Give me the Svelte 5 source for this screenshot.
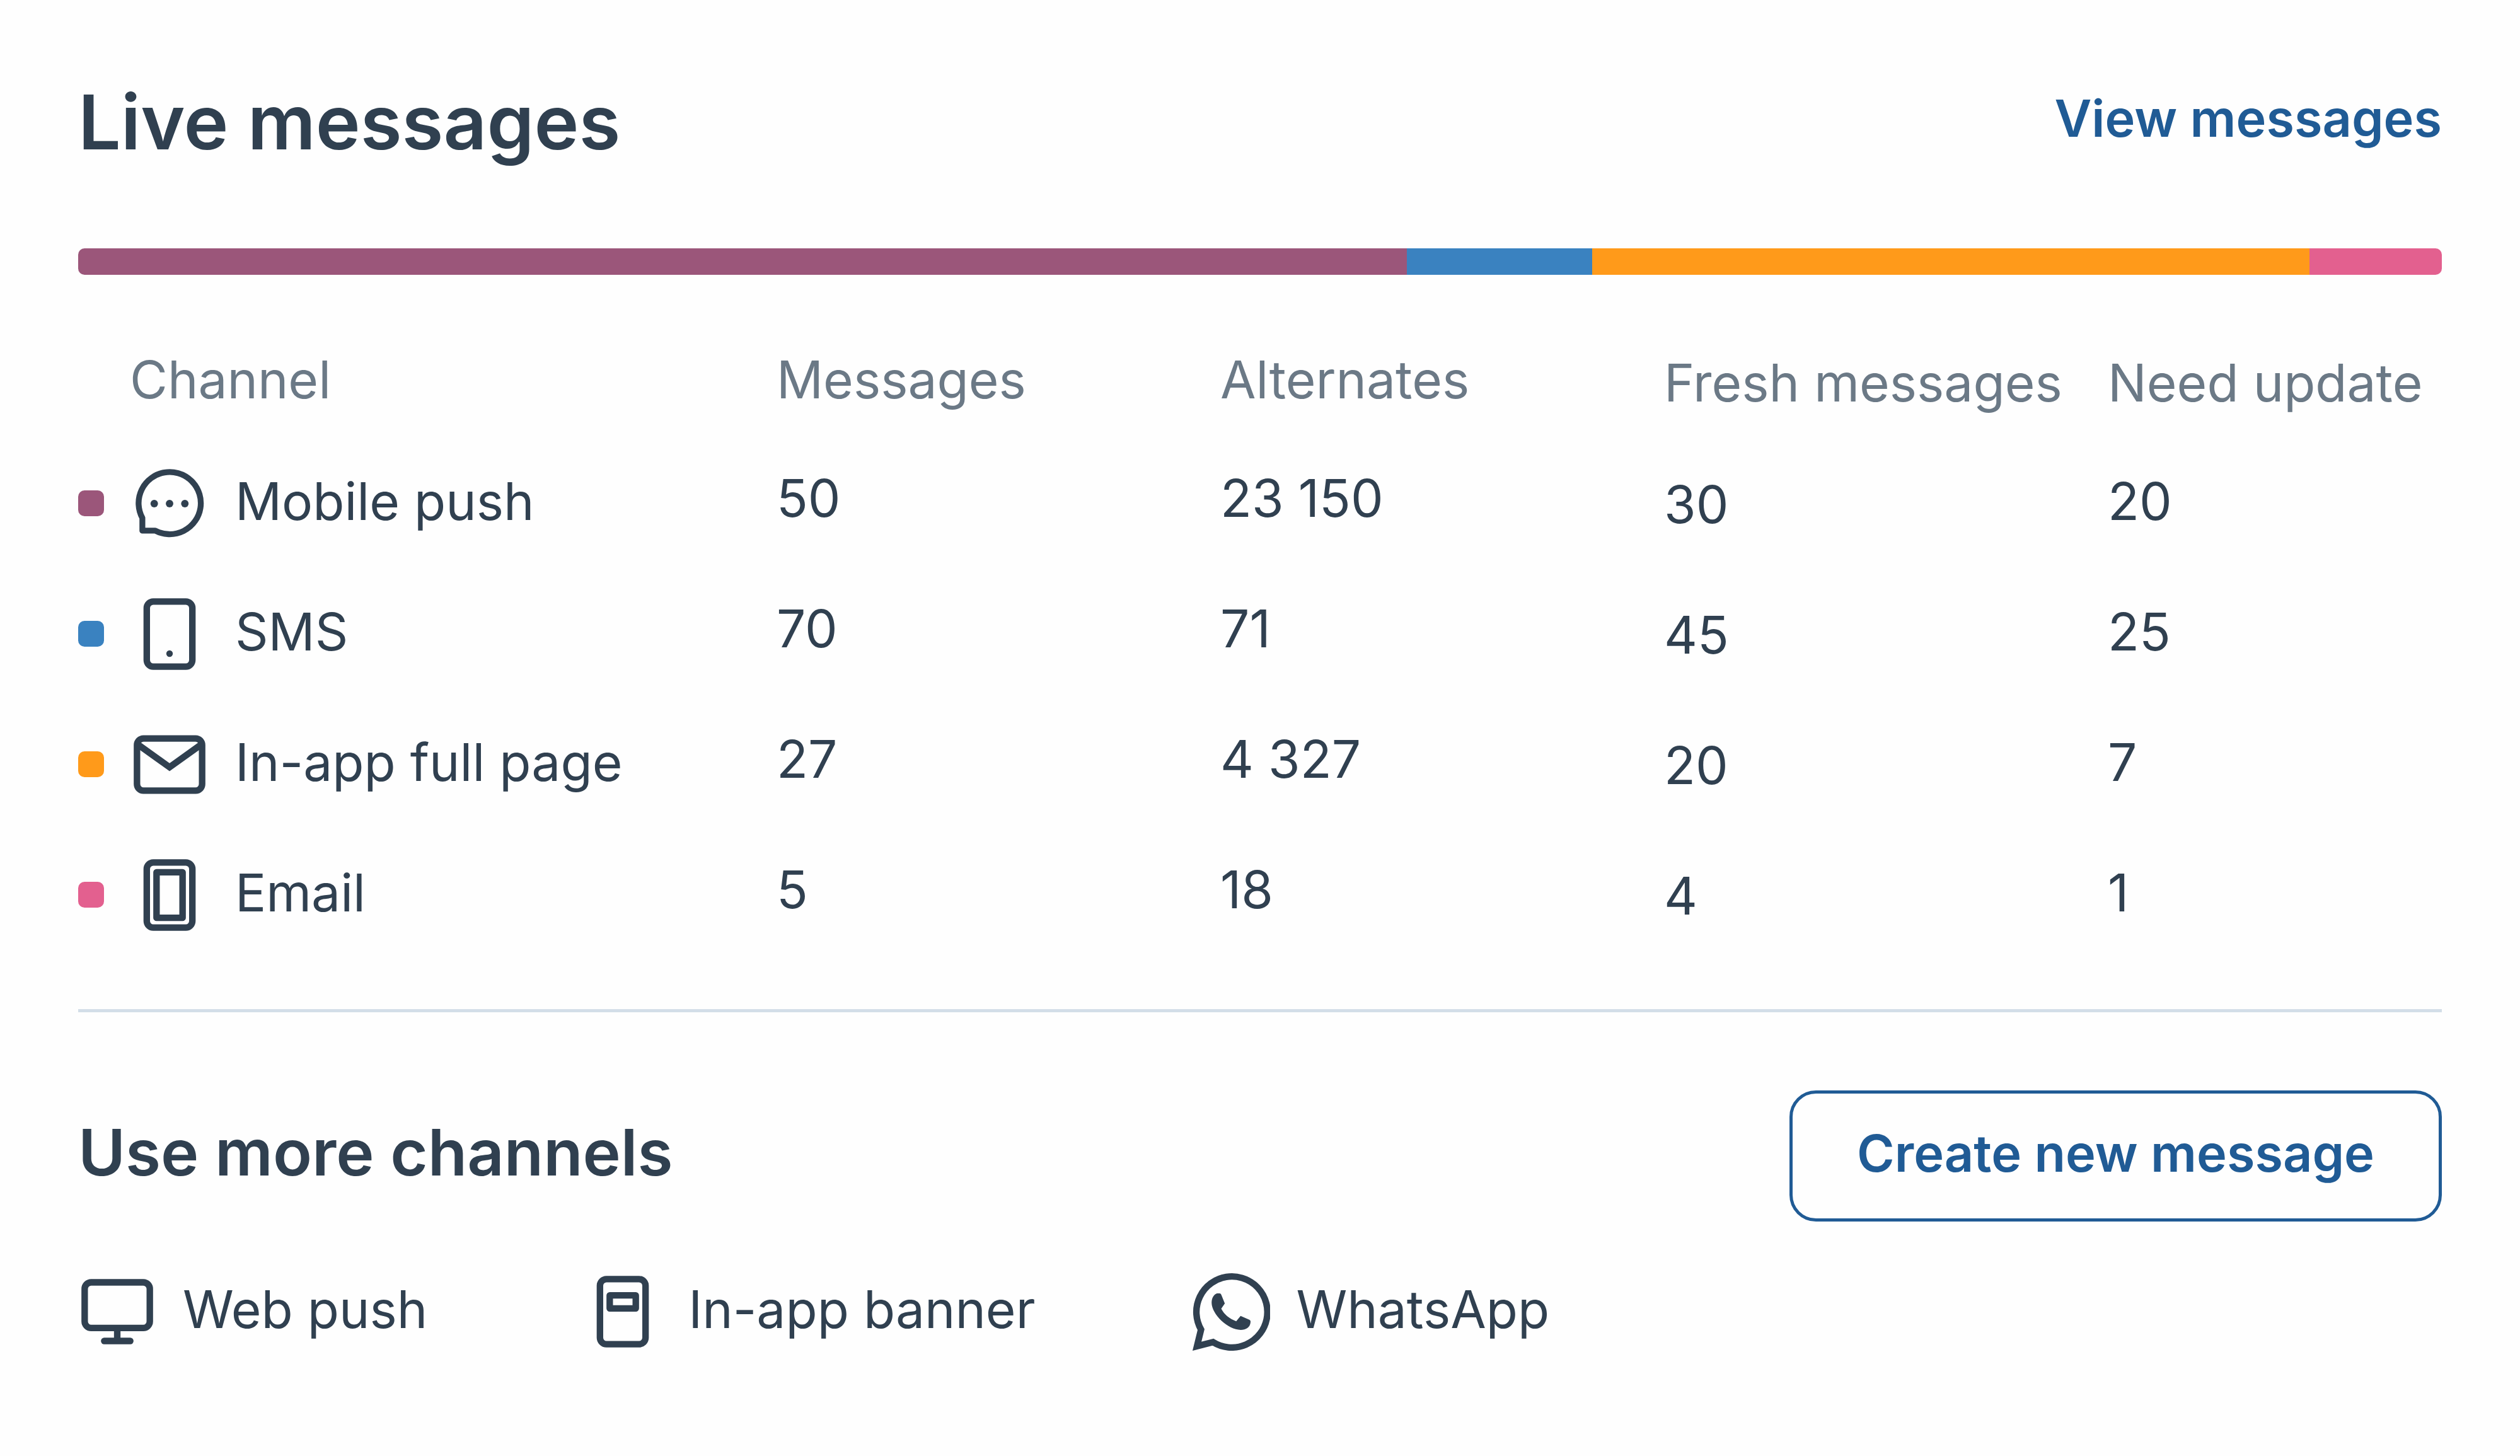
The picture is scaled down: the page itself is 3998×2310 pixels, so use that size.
<script>
	const channels = [
		{ name: 'Mobile push', icon: 'chat', color: '#9b567a', share: 56.2, counts: ['50', '23 150', '30', '20'] },
		{ name: 'SMS', icon: 'phone', color: '#3a82c0', share: 7.85, counts: ['70', '71', '45', '25'] },
		{ name: 'In-app full page', icon: 'mail', color: '#ff9a1a', share: 30.35, counts: ['27', '4 327', '20', '7'] },
		{ name: 'Email', icon: 'fullpage', color: '#e3608f', share: 5.6, counts: ['5', '18', '4', '1'] },
	];

	const moreChannels = [
		{ name: 'Web push', icon: 'monitor' },
		{ name: 'In-app banner', icon: 'banner' },
		{ name: 'WhatsApp', icon: 'whatsapp' },
	];
</script>

<style>
	:global(body) {
		background: #fefefe;
	}

	.card {
		padding: 132px 124px 124px;
		font-family: Inter, "Liberation Sans", sans-serif;
		font-size: 82px;
		line-height: 124px;
		color: #304050;
	}

	header,
	.more-header {
		display: flex;
		justify-content: space-between;
	}

	h2,
	h3 {
		margin: 0;
		font-weight: 600;
	}

	h2 {
		font-size: 120px;
	}

	h3 {
		padding-bottom: 12px;
		font-size: 102px;
	}

	header a,
	button {
		font-size: 81px;
		font-weight: 600;
		color: #205b95;
	}

	header a {
		line-height: 112px;
		text-decoration: none;
	}

	.bar {
		display: flex;
		height: 42px;
		margin-top: 138px;
		border-radius: 10px;
		overflow: hidden;
	}

	table {
		width: 100%;
		margin-top: 85px;
		table-layout: fixed;
		border-collapse: collapse;
	}

	th,
	td {
		box-sizing: border-box;
		padding: 0;
		text-align: left;
		font-weight: 400;
		white-space: nowrap;
	}

	th {
		height: 174px;
		color: #6b7986;
	}

	td {
		height: 207px;
	}

	.col-channel {
		width: 1108px;
	}

	.col-count {
		width: 704px;
	}

	th:first-child {
		padding-left: 82px;
	}

	th:nth-child(-n + 3) {
		padding-bottom: 10px;
	}

	td:nth-child(2),
	td:nth-child(3) {
		padding-bottom: 16px;
	}

	td:nth-child(4) {
		padding-top: 4px;
	}

	td:nth-child(5),
	.name {
		padding-bottom: 6px;
	}

	.channel {
		display: flex;
		align-items: center;
		gap: 42px;
	}

	.swatch {
		width: 41px;
		height: 41px;
		border-radius: 10px;
	}

	svg {
		flex-shrink: 0;
		width: 124px;
		height: 124px;
		fill: none;
		stroke: currentColor;
		stroke-width: 2;
	}

	svg .solid {
		fill: currentColor;
		stroke: none;
	}

	hr {
		height: 5px;
		margin: 78px 0 124px;
		border: 0;
		background: #d3dee8;
	}

	.more-header {
		align-items: center;
	}

	button {
		height: 208px;
		padding: 0 102px 8px;
		border: 5px solid #205b95;
		border-radius: 42px;
		background: none;
		font-family: inherit;
	}

	ul {
		display: flex;
		gap: 248px;
		margin: 78px 0 0;
		padding: 0;
		list-style: none;
	}
</style>

{#snippet icon(name)}
	<svg viewBox="0 0 24 24" aria-hidden="true">
		{#if name === 'chat'}
			<path
				stroke-width="1.8"
				stroke-linejoin="round"
				d="M3.65 16.4A9.55 9.55 0 1 1 7.6 20.3H3.65Z"
			/>
			<circle class="solid" cx="7.3" cy="12" r="1.15" />
			<circle class="solid" cx="12" cy="12" r="1.15" />
			<circle class="solid" cx="16.7" cy="12" r="1.15" />
		{:else if name === 'phone'}
			<rect x="5" y="2" width="14" height="20" rx="2" />
			<circle class="solid" cx="12" cy="18" r="1" />
		{:else if name === 'mail'}
			<rect x="2" y="4" width="20" height="16" rx="2" />
			<path d="M2.5 6 12 12.8 21.5 6" />
		{:else if name === 'fullpage'}
			<rect x="5" y="2" width="14" height="20" rx="2" />
			<rect x="8" y="5" width="8" height="14" stroke-linejoin="round" />
		{:else if name === 'monitor'}
			<rect x="2" y="3" width="20" height="14" rx="2" />
			<path d="M12 17v4" />
			<path stroke-linecap="round" d="M8 21h8" />
		{:else if name === 'banner'}
			<rect x="5" y="2" width="14" height="20" rx="2" />
			<rect x="8" y="7" width="8" height="4" stroke-linejoin="round" />
		{:else if name === 'whatsapp'}
			<path d="M2.8 17.5A10.9 10.9 0 1 1 6.5 21.35L1.55 22.6Z" />
			<path
				class="solid"
				d="M7.7 6.4H8.5Q8.85 6.4 9 6.75L10.1 9.5 9 11.1C9.9 12.9 11.5 14.2 13.6 14.95L14.95 13.3 17.7 14.5Q18.1 14.7 18 15.2C17.9 16.9 16.5 17.6 15 17.6 11 17.6 6.1 12.8 6.05 9.3 6.05 7.7 6.8 6.7 7.7 6.4Z"
			/>
		{/if}
	</svg>
{/snippet}

<section class="card">
	<header>
		<h2>Live messages</h2>
		<a href="#messages">View messages</a>
	</header>

	<div class="bar">
		{#each channels as channel}
			<div style="width: {channel.share}%; background: {channel.color}"></div>
		{/each}
	</div>

	<table id="messages">
		<colgroup>
			<col class="col-channel">
			<col class="col-count">
			<col class="col-count">
			<col class="col-count">
			<col>
		</colgroup>
		<thead>
			<tr>
				<th>Channel</th>
				<th>Messages</th>
				<th>Alternates</th>
				<th>Fresh messages</th>
				<th>Need update</th>
			</tr>
		</thead>
		<tbody>
			{#each channels as channel}
				<tr>
					<td>
						<div class="channel">
							<span class="swatch" style="background: {channel.color}"></span>
							{@render icon(channel.icon)}
							<span class="name">{channel.name}</span>
						</div>
					</td>
					{#each channel.counts as count}
						<td>{count}</td>
					{/each}
				</tr>
			{/each}
		</tbody>
	</table>

	<hr>

	<div class="more-header">
		<h3>Use more channels</h3>
		<button type="button">Create new message</button>
	</div>

	<ul>
		{#each moreChannels as channel}
			<li class="channel">
				{@render icon(channel.icon)}
				<span class="name">{channel.name}</span>
			</li>
		{/each}
	</ul>
</section>
